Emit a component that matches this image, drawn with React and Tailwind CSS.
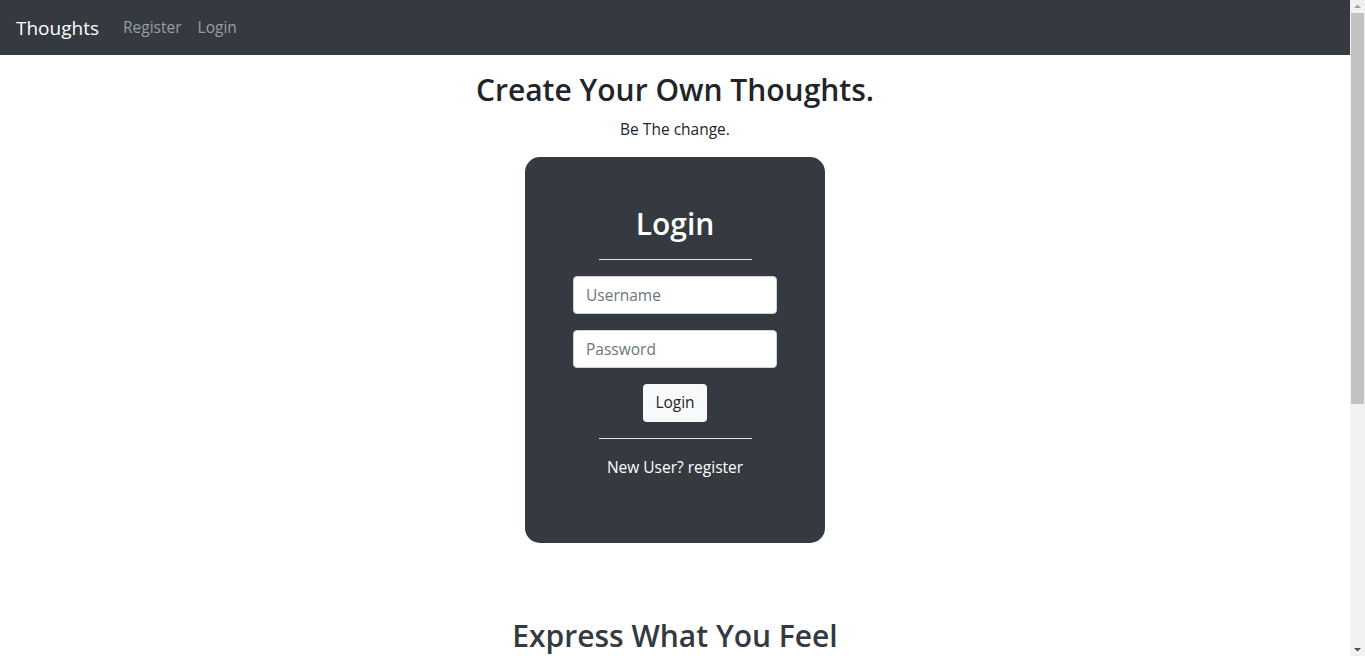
import React, { useState } from "react";

const font = { fontFamily: '"Open Sans", "Noto Sans", sans-serif' };

function Navbar() {
  return (
    <nav className="flex h-[55px] items-center bg-[#343a40] px-4">
      <a href="#" className="mr-4 text-[19px] leading-[30px] text-white">Thoughts</a>
      <a href="#" className="px-2 text-[15.5px] text-white/50">Register</a>
      <a href="#" className="px-2 text-[15.5px] text-white/50">Login</a>
    </nav>
  );
}

function LoginCard() {
  const [username, setUsername] = useState("");
  const [password, setPassword] = useState("");

  return (
    <div className="mx-auto w-[300px] rounded-[15px] bg-[#343a40] p-12 text-center">
      <h2 className="mb-2 text-[30px] font-semibold leading-[38px] text-white">Login</h2>
      <hr className="mx-auto my-4 w-3/4 border-t border-[#dee2e6]" />
      <form onSubmit={(e) => e.preventDefault()}>
        <input
          value={username}
          onChange={(e) => setUsername(e.target.value)}
          placeholder="Username"
          className="mb-4 block h-[38px] w-full rounded border border-[#ced4da] bg-white px-3 text-[15.5px] text-[#495057] placeholder:text-[#6c757d] outline-none"
        />
        <input
          type="password"
          value={password}
          onChange={(e) => setPassword(e.target.value)}
          placeholder="Password"
          className="mb-4 block h-[38px] w-full rounded border border-[#ced4da] bg-white px-3 text-[15.5px] text-[#495057] placeholder:text-[#6c757d] outline-none"
        />
        <button type="submit" className="h-[38px] rounded bg-[#f8f9fa] px-3 text-[15.5px] text-[#212529]">Login</button>
      </form>
      <hr className="mx-auto my-4 w-3/4 border-t border-[#dee2e6]" />
      <p className="mb-4 text-[15.5px] leading-6 text-white">New User? register</p>
    </div>
  );
}

function Scrollbar() {
  return (
    <div className="fixed right-0 top-0 flex h-screen w-[15px] flex-col items-center bg-[#f1f1f1]">
      <svg width="15" height="13" viewBox="0 0 15 13" className="shrink-0">
        <path d="M4 8 L7.5 4.5 L11 8 Z" fill="#a3a3a3" />
      </svg>
      <div className="h-[391px] w-[13px] shrink-0 bg-[#c1c1c1]" />
      <div className="flex-1" />
      <svg width="15" height="13" viewBox="0 0 15 13" className="shrink-0">
        <path d="M4 5 L7.5 8.5 L11 5 Z" fill="#505050" />
      </svg>
    </div>
  );
}

export default function App() {
  return (
    <div style={font} className="min-h-[900px] bg-white text-[#212529]">
      <div className="mr-[15px]">
        <Navbar />
        <div className="pt-4 text-center">
          <h2 className="mb-2 text-[30px] font-semibold leading-[38px]">Create Your Own Thoughts.</h2>
          <p className="mb-4 text-[15.5px] leading-6">Be The change.</p>
          <LoginCard />
          <h2 className="mt-[74px] text-[30px] font-semibold leading-[38px] text-[#343a40]">Express What You Feel</h2>
        </div>
      </div>
      <Scrollbar />
    </div>
  );
}
